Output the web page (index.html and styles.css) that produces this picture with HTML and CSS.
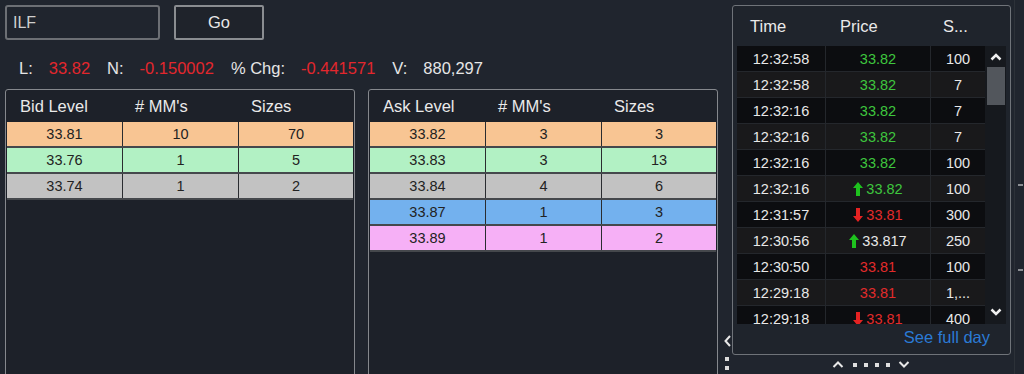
FILE: index.html
```html
<!DOCTYPE html>
<html>
<head>
<meta charset="utf-8">
<link rel="stylesheet" href="styles.css">
</head>
<body>
<div class="app">
  <div class="main">
    <div class="topbar">
      <div class="symbol">ILF</div>
      <button class="go">Go</button>
    </div>
    <div class="stats">
      <span class="lbl">L:</span><span class="val neg">33.82</span>
      <span class="lbl">N:</span><span class="val neg">-0.150002</span>
      <span class="lbl">% Chg:</span><span class="val neg">-0.441571</span>
      <span class="lbl">V:</span><span class="val">880,297</span>
    </div>
    <div class="books">
      <div class="book">
        <div class="book-head"><span>Bid Level</span><span># MM's</span><span>Sizes</span></div>
        <div class="book-row orange"><span>33.81</span><span>10</span><span>70</span></div>
        <div class="book-row green"><span>33.76</span><span>1</span><span>5</span></div>
        <div class="book-row gray"><span>33.74</span><span>1</span><span>2</span></div>
      </div>
      <div class="book">
        <div class="book-head"><span>Ask Level</span><span># MM's</span><span>Sizes</span></div>
        <div class="book-row orange"><span>33.82</span><span>3</span><span>3</span></div>
        <div class="book-row green"><span>33.83</span><span>3</span><span>13</span></div>
        <div class="book-row gray"><span>33.84</span><span>4</span><span>6</span></div>
        <div class="book-row blue"><span>33.87</span><span>1</span><span>3</span></div>
        <div class="book-row pink"><span>33.89</span><span>1</span><span>2</span></div>
      </div>
    </div>
  </div>
  <div class="splitter">
    <svg class="chev-left" width="7" height="12" viewBox="0 0 7 12"><polyline points="6,1 1.5,6 6,11" fill="none" stroke="#e8e8e8" stroke-width="2"/></svg>
    <span class="sq"></span>
    <span class="sq"></span>
  </div>
  <div class="tscol">
    <div class="ts">
      <div class="ts-head"><span>Time</span><span>Price</span><span>S...</span></div>
      <div class="ts-body">
        <div class="ts-rows">
          <div class="ts-row"><span>12:32:58</span><span class="up">33.82</span><span>100</span></div>
          <div class="ts-row alt"><span>12:32:58</span><span class="up">33.82</span><span>7</span></div>
          <div class="ts-row"><span>12:32:16</span><span class="up">33.82</span><span>7</span></div>
          <div class="ts-row alt"><span>12:32:16</span><span class="up">33.82</span><span>7</span></div>
          <div class="ts-row"><span>12:32:16</span><span class="up">33.82</span><span>100</span></div>
          <div class="ts-row alt"><span>12:32:16</span><span class="up"><svg class="arr" width="10" height="14" viewBox="0 0 10 14"><polygon points="5,0 10,6 7,6 7,14 3,14 3,6 0,6" fill="#1ec21e"/></svg>33.82</span><span>100</span></div>
          <div class="ts-row"><span>12:31:57</span><span class="dn"><svg class="arr" width="10" height="14" viewBox="0 0 10 14"><polygon points="3,0 7,0 7,8 10,8 5,14 0,8 3,8" fill="#e52222"/></svg>33.81</span><span>300</span></div>
          <div class="ts-row alt"><span>12:30:56</span><span class="flat"><svg class="arr" width="10" height="14" viewBox="0 0 10 14"><polygon points="5,0 10,6 7,6 7,14 3,14 3,6 0,6" fill="#1ec21e"/></svg>33.817</span><span>250</span></div>
          <div class="ts-row"><span>12:30:50</span><span class="dn">33.81</span><span>100</span></div>
          <div class="ts-row alt"><span>12:29:18</span><span class="dn">33.81</span><span>1,...</span></div>
          <div class="ts-row"><span>12:29:18</span><span class="dn"><svg class="arr" width="10" height="14" viewBox="0 0 10 14"><polygon points="3,0 7,0 7,8 10,8 5,14 0,8 3,8" fill="#e52222"/></svg>33.81</span><span>400</span></div>
        </div>
        <div class="scrollbar">
          <svg class="chev" width="12" height="8" viewBox="0 0 12 8"><polyline points="1.5,6.5 6,2 10.5,6.5" fill="none" stroke="#f0f0f0" stroke-width="2.5"/></svg>
          <div class="thumb"></div>
          <div class="track"></div>
          <svg class="chev" width="12" height="8" viewBox="0 0 12 8"><polyline points="1.5,1.5 6,6 10.5,1.5" fill="none" stroke="#f0f0f0" stroke-width="2.5"/></svg>
        </div>
      </div>
      <div class="ts-foot"><a class="fullday">See full day</a></div>
    </div>
    <div class="pager">
      <svg width="12" height="7" viewBox="0 0 12 7"><polyline points="1.5,6 6,1.5 10.5,6" fill="none" stroke="#e8e8e8" stroke-width="2"/></svg>
      <span class="dot"></span><span class="dot"></span><span class="dot"></span><span class="dot"></span>
      <svg width="12" height="7" viewBox="0 0 12 7"><polyline points="1.5,1 6,5.5 10.5,1" fill="none" stroke="#e8e8e8" stroke-width="2"/></svg>
    </div>
  </div>
  <div class="edge"><span class="mark m1"></span><span class="mark m2"></span></div>
</div>
</body>
</html>
```
FILE: styles.css
```css
* { box-sizing: border-box; }
html, body { margin: 0; padding: 0; }
body {
  background: #20252e;
  font-family: "Liberation Sans", Arial, sans-serif;
  color: #e4e4e4;
  width: 1024px;
  height: 374px;
  overflow: hidden;
}
.app {
  display: flex;
  height: 374px;
  overflow: hidden;
}
.main {
  width: 718px;
  padding: 5px 0 0 5px;
  display: flex;
  flex-direction: column;
}
.topbar {
  display: flex;
  gap: 14px;
  height: 35px;
}
.symbol {
  width: 155px;
  height: 35px;
  border: 2px solid #6c6f74;
  border-radius: 3px;
  font-size: 16px;
  line-height: 31px;
  padding-left: 6px;
  color: #cfcfcf;
}
.go {
  width: 90px;
  height: 35px;
  border: 2px solid #8a8d91;
  border-radius: 2px;
  background: #1f232b;
  color: #e8e8e8;
  font-family: "Liberation Sans", Arial, sans-serif;
  font-size: 16.5px;
  padding: 0;
}
.stats {
  display: flex;
  align-items: center;
  height: 18px;
  margin: 19px 0 12px 14px;
  font-size: 16.5px;
  white-space: nowrap;
}
.lbl { margin-right: 16px; color: #e6e6e6; }
.val { margin-right: 17px; color: #e6e6e6; }
.val.neg { color: #e3272d; }
.books {
  display: flex;
  gap: 13px;
}
.book {
  width: 350px;
  height: 300px;
  border: 1px solid #85888d;
  border-radius: 3px 3px 0 0;
  background: #1d2129;
  padding: 0 1px;
}
.book-head {
  display: grid;
  grid-template-columns: 115px 116px 115px;
  height: 32px;
  align-items: center;
  font-size: 16.5px;
  color: #eaeaea;
}
.book-head span { padding-left: 13px; }
.book-row {
  display: grid;
  grid-template-columns: 115px 116px 115px;
  height: 26px;
  border-bottom: 2px solid #45484c;
  font-size: 14.5px;
  color: #222;
}
.book-row span {
  text-align: center;
  line-height: 24px;
}
.book-row span + span { border-left: 1px solid #2a2c30; }
.orange { background: #f8c593; }
.green { background: #b2f1c4; }
.gray { background: #c2c2c2; }
.blue { background: #73b1ee; }
.pink { background: #f6b0f6; }

.splitter {
  width: 14px;
  display: flex;
  flex-direction: column;
  align-items: flex-start;
  padding: 335px 0 0 6px;
}
.chev-left { display: block; }
.sq {
  width: 4px;
  height: 4px;
  background: #dcdcdc;
  margin-left: 1px;
}
.chev-left + .sq { margin-top: 10px; }
.sq + .sq { margin-top: 5px; }

.tscol {
  width: 279px;
  padding-top: 5px;
  display: flex;
  flex-direction: column;
}
.ts {
  height: 350px;
  border: 1px solid #6f7379;
  border-radius: 3px;
  background: #1f242c;
  display: flex;
  flex-direction: column;
}
.ts-head {
  height: 40px;
  display: grid;
  grid-template-columns: 88px 105px 55px;
  margin: 0 4px;
  align-items: center;
  font-size: 16.5px;
  color: #eaeaea;
}
.ts-head span { padding-left: 13px; }
.ts-head span:nth-child(2) { padding-left: 15px; }
.ts-body {
  height: 278px;
  display: flex;
  padding: 0 4px;
}
.ts-rows {
  width: 248px;
  height: 278px;
  overflow: hidden;
  background: #0c0d10;
}
.ts-row {
  display: grid;
  grid-template-columns: 88px 105px 55px;
  height: 26px;
  background: #0c0d10;
  font-size: 14.5px;
  color: #e8e8e8;
}
.ts-row.alt { background: #19191b; }
.ts-row span {
  display: flex;
  align-items: center;
  justify-content: center;
  border-bottom: 1px solid #24272c;
}
.ts-row span + span { border-left: 1px solid #24272c; }
.up { color: #3ec63e; }
.dn { color: #e22b2b; }
.flat { color: #e8e8e8; }
.arr { margin-right: 3px; }
.scrollbar {
  width: 21px;
  background: #16191e;
  display: flex;
  flex-direction: column;
  align-items: center;
}
.scrollbar .chev { margin: 7px 0 6px; display: block; }
.thumb {
  width: 18px;
  height: 38px;
  background: #52565c;
}
.track { flex: 1; }
.scrollbar .chev:last-child { margin: 0 0 8px; }
.ts-foot {
  height: 30px;
  text-align: right;
  padding-right: 20px;
  line-height: 26px;
}
.fullday {
  color: #2b7bd6;
  font-size: 16.5px;
}
.pager {
  height: 19px;
  display: flex;
  align-items: center;
  padding-left: 100px;
}
.pager svg { display: block; }
.pager .dot {
  width: 4px;
  height: 4px;
  background: #dedede;
  margin-left: 7px;
}
.pager .dot:first-of-type { margin-left: 9px; }
.pager svg:last-child { margin-left: 8px; }
.edge {
  flex: 1;
  position: relative;
}
.edge::before {
  content: "";
  display: block;
  position: absolute;
  left: 3px;
  top: 0;
  bottom: 0;
  width: 1px;
  background: #2c3138;
}
.mark {
  position: absolute;
  left: 7px;
  width: 5px;
  height: 2px;
  background: #8a8d92;
}
.m1 { top: 184px; }
.m2 { top: 269px; }
```
